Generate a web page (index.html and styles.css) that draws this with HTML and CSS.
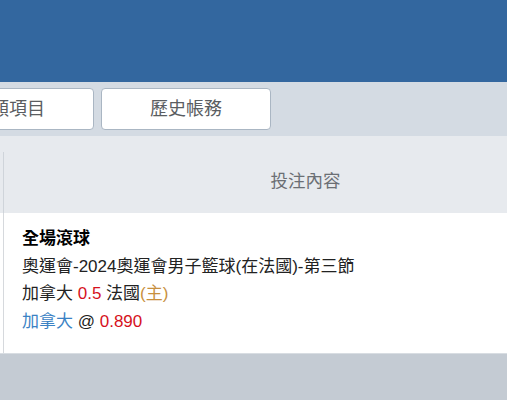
FILE: index.html
```html
<!DOCTYPE html>
<html lang="zh-Hant">

<head>
    <meta charset="UTF-8">
    <meta name="viewport" content="width=device-width, initial-scale=1">
    <title>投注紀錄</title>
    <link rel="stylesheet" href="styles.css">
</head>

<body>

    <!-- top bar -->
    <div class="topbar"></div>

    <!-- tabs -->
    <div class="tabs">
        <button class="tab">各類項目</button>
        <button class="tab">歷史帳務</button>
    </div>

    <!-- bet table -->
    <div class="bet-table">
        <div class="bet-head">
            <div class="head-cell">投注內容</div>
        </div>
        <div class="bet-row">
            <div class="bet-cell">
                <div class="bet-type">全場滾球</div>
                <div>奧運會-2024奧運會男子籃球(在法國)-第三節</div>
                <div>加拿大 <span class="odds">0.5</span> 法國<span class="home">(主)</span></div>
                <div><span class="pick">加拿大</span> @ <span class="odds">0.890</span></div>
            </div>
        </div>
    </div>

    <div class="footer"></div>

</body>

</html>
```
FILE: styles.css
```css
body {
    font-family: 'Liberation Sans', 'Noto Sans CJK TC', sans-serif;
    background-color: #c4cbd3;
    margin: 0;
    padding: 0;
    overflow: hidden;
}

.topbar {
    height: 82px;
    background-color: #33679f;
}

.tabs {
    display: flex;
    gap: 7px;
    height: 54px;
    padding-top: 6px;
    margin-left: -76px;
    box-sizing: border-box;
    background-color: #d4dbe3;
}

.tab {
    width: 170px;
    height: 42px;
    flex-shrink: 0;
    background-color: #ffffff;
    border: 1px solid #aab6c3;
    border-radius: 4px;
    font-family: inherit;
    font-size: 18px;
    color: #5a5d61;
    padding: 0 0 5px;
}

.bet-table {
    width: 700px;
}

.bet-head {
    height: 77px;
    padding-top: 16px;
    box-sizing: border-box;
    background-color: #e7eaee;
    padding-left: 3px;
}

.head-cell {
    width: 604px;
    height: 61px;
    border-left: 1px solid #cfd4da;
    box-sizing: border-box;
    display: flex;
    align-items: center;
    justify-content: center;
    padding-bottom: 6px;
    font-size: 17.5px;
    color: #6b6f74;
}

.bet-row {
    background-color: #ffffff;
    padding-left: 3px;
}

.bet-cell {
    border-left: 1px solid #d6d9dd;
    height: 140px;
    box-sizing: border-box;
    padding: 12px 0 0 18px;
    font-size: 17px;
    line-height: 27.5px;
    color: #222;
}

.bet-type {
    font-weight: bold;
    color: #000;
}

.odds {
    color: #d6121c;
}

.home {
    color: #c8903e;
}

.pick {
    color: #3a82c4;
}

.footer {
    height: 47px;
    border-top: 1px solid #d8dde2;
}
```
